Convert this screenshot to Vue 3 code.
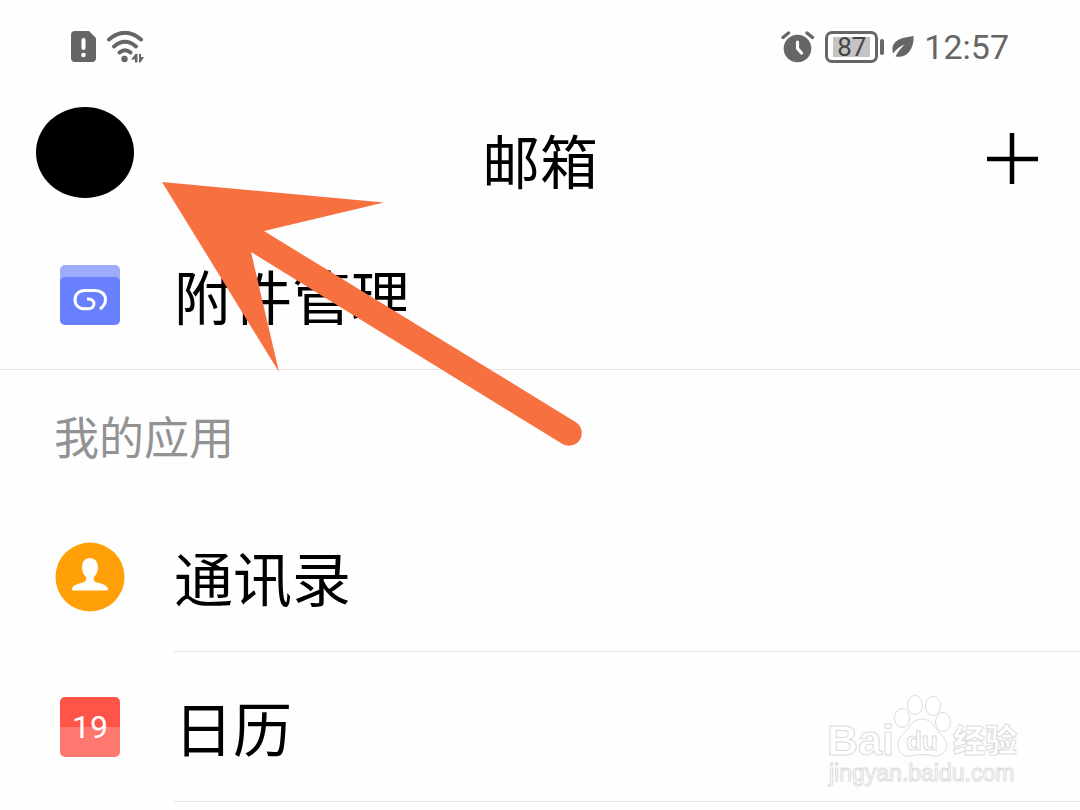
<template>
    <div class="mail-page">
        <div class="status-bar">
            <div class="status-group">
                <svg class="icon-sim" viewBox="0 0 26 32" aria-hidden="true">
                    <path d="M4 0h14l7 7v20a4 4 0 0 1-4 4H4a4 4 0 0 1-4-4V4a4 4 0 0 1 4-4z" fill="#666" />
                    <path d="M12.500 9v8" stroke="#fff" stroke-width="4" stroke-linecap="round" />
                    <circle cx="12.500" cy="24" r="2.300" fill="#fff" />
                </svg>
                <svg class="icon-wifi" viewBox="0 0 38 32" aria-hidden="true">
                    <g fill="none" stroke="#666" stroke-width="4" stroke-linecap="round">
                        <path d="M2 8.500Q18 -5 34 8.500" />
                        <path d="M7 15.500Q18 6 29 15.500" />
                        <path d="M12.500 21.500Q18 17 23.500 21.500" />
                    </g>
                    <circle cx="17.500" cy="28" r="3.200" fill="#666" />
                    <path d="M24 28.500l4.500-5.500h2v8.500h-2.500v-3zM32 23h2v3h3l-3.500 5.500h-1.500z" fill="#666" />
                </svg>
            </div>
            <div class="status-group">
                <svg class="icon-alarm" viewBox="0 0 34 32" aria-hidden="true">
                    <circle cx="16.500" cy="17.500" r="13.800" fill="#666" />
                    <path d="M2 6.500L7.500 2M26 2l5.500 4.500" stroke="#666" stroke-width="3.400" stroke-linecap="round" />
                    <path d="M16.500 11v6.500l4 4.500" fill="none" stroke="#fff" stroke-width="3.200"
                        stroke-linecap="round" stroke-linejoin="round" />
                </svg>
                <div class="battery">
                    <div class="battery-level">{{ battery }}</div>
                </div>
                <svg class="icon-leaf" viewBox="0 0 22 22" aria-hidden="true">
                    <path d="M21.500 0C14 1 6 2.500 2.500 7 0 10 0 14 1 17.500 4.500 13 8 10.500 12.500 8.500 9.500 12 6 15 3.500 20.500 9 21.500 14 20 17 16 20.500 11.500 22 6 21.500 0z" fill="#666" />
                </svg>
                <span class="clock">12:57</span>
            </div>
        </div>

        <header class="header">
            <button class="avatar" type="button" aria-label="avatar"></button>
            <h1 class="title">邮箱</h1>
            <button class="add-btn" type="button" aria-label="add">
                <svg viewBox="0 0 52 52" aria-hidden="true">
                    <path d="M26 0v51M1 26h51" stroke="#000" stroke-width="4.500" />
                </svg>
            </button>
        </header>

        <a class="row row-full" href="#">
            <span class="row-icon">
                <svg class="icon-box" viewBox="0 0 60 60" aria-hidden="true">
                    <rect width="60" height="30" rx="5" fill="#9dabfb" />
                    <rect y="12" width="60" height="48" rx="5" fill="#6880fd" />
                    <path d="M27 34C31 33.500 34 35.500 34 38.500c0 3.500-2.500 5.300-5.500 5.300h-4c-6 0-9.500-4-9.500-9.300s4-9 10-9h10c6 0 10.500 3.700 10.500 9 0 4-2 7-5.500 9.500"
                        fill="none" stroke="#fff" stroke-width="3" />
                </svg>
            </span>
            <span class="row-label">附件管理</span>
        </a>

        <h2 class="section-title">我的应用</h2>

        <a v-for="app in apps" :key="app.id" class="row" href="#">
            <span class="row-icon">
                <svg v-if="app.id === 'contacts'" class="icon-contact" viewBox="0 0 70 70" aria-hidden="true">
                    <circle cx="35" cy="35" r="34.500" fill="#ffa008" />
                    <path d="M35 16c5 0 8 4 8 9.500 0 4-1.500 7-4 9.500-1 4 1 5 5 6 5 1.200 9 3 9 6.500 0 .7-.5 1-1 1H18c-.6 0-1-.4-1-1 0-3.500 4-5.300 9-6.500 4-1 6-2 5-6-2.500-2.500-4-5.500-4-9.500C27 20 30 16 35 16z" fill="#fff" />
                </svg>
                <span v-else class="icon-calendar">19</span>
            </span>
            <span class="row-label">{{ app.name }}</span>
        </a>

        <!-- arrow pointing at the avatar -->
        <svg class="arrow" viewBox="0 0 421 265" aria-hidden="true">
            <path d="M0 0L222 20.500 102 49 413.500 240A12.500 12.500 0 0 1 400.500 262L89 70 117 190z" fill="#f77040" />
        </svg>

        <svg class="watermark" viewBox="0 0 200 96" aria-label="Baidu 经验">
            <g fill="#fff" stroke="#dcdcdc" stroke-width="1">
                <text class="mark-main" x="1" y="61">Bai</text>
                <ellipse cx="76" cy="24" rx="7.500" ry="9.500" />
                <ellipse cx="89" cy="11" rx="7.500" ry="9.500" />
                <ellipse cx="107" cy="12" rx="7.500" ry="9.500" />
                <ellipse cx="117" cy="28" rx="7.500" ry="9.500" />
                <path d="M96 25c7 0 11 5 15 11 4 5 10 9 10 16-1 7-7 11-13 10-8-2-16-2-24 0-6 1-11-3-12-10-1-7 5-11 9-16 4-6 8-11 15-11z" />
                <text class="mark-du" x="80" y="56">du</text>
                <text class="mark-cn" x="127" y="58">经验</text>
                <text class="mark-url" x="3" y="87">jingyan.baidu.com</text>
            </g>
        </svg>
    </div>
</template>

<script setup>
import { ref } from 'vue'

const battery = ref(87)

const apps = [
    { id: 'contacts', name: '通讯录' },
    { id: 'calendar', name: '日历' }
]
</script>

<style>
body {
    margin: 0;
    background: #fefefe;
}
</style>

<style scoped>
.mail-page {
    position: relative;
    min-height: 100vh;
    overflow: hidden;
    color: #000;
    font-family: "Noto Sans CJK SC", sans-serif;
}

.status-bar {
    display: flex;
    justify-content: space-between;
    align-items: center;
    height: 93px;
    padding: 0 71px;
    font-family: Roboto, sans-serif;
}

.status-group {
    display: flex;
    align-items: center;
    gap: 10px;
}

.icon-sim {
    width: 26px;
    height: 32px;
}

.icon-wifi {
    width: 38px;
    height: 32px;
}

.icon-alarm {
    width: 34px;
    height: 32px;
}

.battery {
    position: relative;
    box-sizing: border-box;
    width: 53px;
    height: 32px;
    margin-right: 4px;
    padding: 3px;
    border: 3px solid #666;
    border-radius: 7px;
}

.battery::after {
    content: "";
    position: absolute;
    top: 5px;
    right: -9px;
    width: 4px;
    height: 16px;
    border-radius: 2px;
    background: #666;
}

.battery-level {
    width: 37px;
    margin: 0 auto;
    background: #c4c4c4;
    color: #444;
    font-size: 26px;
    line-height: 20px;
    text-align: center;
}

.icon-leaf {
    width: 22px;
    height: 22px;
}

.clock {
    color: #666;
    font-size: 34px;
    line-height: 40px;
}

.header {
    display: grid;
    grid-template-columns: 1fr auto 1fr;
    align-items: center;
    box-sizing: border-box;
    height: 127px;
    padding: 5px 36px 0;
}

.avatar {
    align-self: start;
    width: 98px;
    height: 91px;
    margin-top: 9px;
    padding: 0;
    border: 0;
    border-radius: 50%;
    background: #000;
}

.title {
    margin: 0;
    font-size: 58px;
    font-weight: 400;
    line-height: 84px;
}

.add-btn {
    justify-self: end;
    width: 52px;
    height: 52px;
    margin-right: 6px;
    padding: 0;
    border: 0;
    background: none;
}

.add-btn svg {
    display: block;
}

.row {
    display: flex;
    align-items: center;
    gap: 48px;
    padding-left: 54px;
    color: #000;
    text-decoration: none;
}

.row-icon {
    display: flex;
    justify-content: center;
    flex: 0 0 72px;
}

.row-label {
    flex: 1;
    border-bottom: 1px solid #e4e4e4;
    font-size: 59px;
    line-height: 149px;
}

.row-full {
    border-bottom: 1px solid #e4e4e4;
}

.row-full .row-label {
    border-bottom: 0;
}

.icon-box {
    width: 60px;
    height: 60px;
}

.icon-contact {
    width: 70px;
    height: 70px;
}

.icon-calendar {
    width: 60px;
    border-radius: 5px;
    background: linear-gradient(#ff5549 50%, #ff786f 50%);
    color: #fff;
    font-family: Roboto, sans-serif;
    font-size: 32px;
    line-height: 60px;
    text-align: center;
}

.section-title {
    margin: 0;
    padding-left: 54px;
    color: #929295;
    font-size: 45px;
    font-weight: 400;
    line-height: 132px;
}

.arrow {
    position: absolute;
    top: 182px;
    left: 162px;
    width: 421px;
    height: 265px;
    pointer-events: none;
}

.watermark {
    position: absolute;
    right: 54px;
    bottom: 20px;
    width: 200px;
    height: 96px;
    pointer-events: none;
}

.mark-main {
    font: 700 43px "Liberation Sans", sans-serif;
}

.mark-du {
    font: 700 26px "Liberation Sans", sans-serif;
}

.mark-cn {
    font: 900 32px "Liberation Sans", "Noto Sans CJK SC", sans-serif;
}

.mark-url {
    font: 400 23px "Liberation Sans", sans-serif;
}
</style>
